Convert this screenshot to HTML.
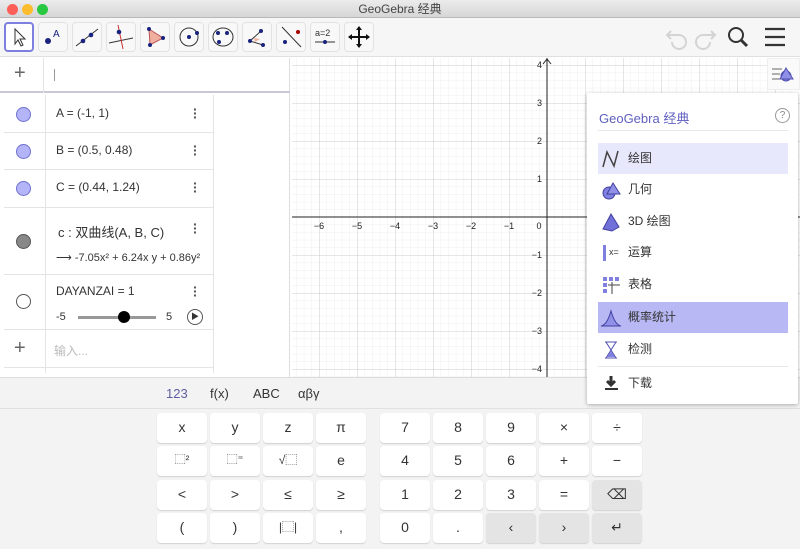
<!DOCTYPE html>
<html><head><meta charset="utf-8"><style>
*{box-sizing:border-box;margin:0;padding:0}
body{width:800px;height:549px;overflow:hidden;background:#fff;font-family:"Liberation Sans","Noto Sans CJK SC",sans-serif;position:relative;color:#333}
.abs{position:absolute}
#title{left:0;top:0;width:800px;height:18px;background:linear-gradient(#ececec,#d6d6d6);border-bottom:1px solid #b8b8b8;text-align:center;font-size:12px;line-height:18px;color:#444}
.dot{position:absolute;top:4px;width:11px;height:11px;border-radius:50%}
#tb{left:0;top:18px;width:800px;height:39px;background:#f6f6f6;border-bottom:1px solid #e0e0e0}
.tool{position:absolute;top:4px;width:30px;height:30px;border:1px solid #e2e2e2;border-radius:4px;background:#f8f8f8}
.row{position:absolute;left:4px;width:209px;border-bottom:1px solid #e4e4e4;font-size:12px}
.mk{position:absolute;left:12px;width:15px;height:15px;border-radius:50%}
.menu3{position:absolute;left:189px;font-size:14px;line-height:4px;color:#555;font-weight:bold}
.key{position:absolute;width:50px;height:30px;background:#fff;border-radius:4px;box-shadow:0 1px 1px #d0d0d0;text-align:center;line-height:28px;font-size:14px;color:#333}
.key.g{background:#e4e4e4}
.mi{position:absolute;left:598px;width:190px;height:31px;font-size:12px;line-height:31px;padding-left:30px;color:#333}
</style></head><body>
<div id="title" class="abs">GeoGebra 经典
<div class="dot" style="left:7px;background:#fc5f57"></div><div class="dot" style="left:22px;background:#fdbc2e"></div><div class="dot" style="left:37px;background:#28c840"></div></div>
<div id="tb" class="abs">
<div class="tool" style="left:4px;border:2px solid #7f7fdf;background:#fff"><svg width="26" height="26"><path d="M9 5 L9 20 L12 16 L15 22 L17 21 L14 15 L19 15 Z" fill="#fff" stroke="#333"/></svg></div>
<div class="tool" style="left:38px"><svg width="28" height="28"><circle cx="9" cy="18" r="3" fill="#1a237e"/><text x="14" y="14" font-size="10" fill="#1a237e">A</text></svg></div>
<div class="tool" style="left:72px"><svg width="28" height="28"><line x1="3" y1="23" x2="25" y2="6" stroke="#333"/><circle cx="10" cy="18" r="2.3" fill="#1a237e"/><circle cx="18" cy="12" r="2.3" fill="#1a237e"/></svg></div>
<div class="tool" style="left:106px"><svg width="28" height="28"><line x1="2" y1="20" x2="26" y2="15" stroke="#333"/><line x1="11" y1="2" x2="16" y2="26" stroke="#c33"/><circle cx="12" cy="9" r="2.3" fill="#1a237e"/></svg></div>
<div class="tool" style="left:140px"><svg width="28" height="28"><path d="M8 6 L22 15 L9 22 Z" fill="#f0b0a0" stroke="#b55"/><circle cx="8" cy="6" r="2" fill="#1a237e"/><circle cx="22" cy="15" r="2" fill="#1a237e"/><circle cx="9" cy="22" r="2" fill="#1a237e"/></svg></div>
<div class="tool" style="left:174px"><svg width="28" height="28"><circle cx="14" cy="14" r="9" fill="none" stroke="#333"/><circle cx="14" cy="14" r="2" fill="#1a237e"/><circle cx="22" cy="10" r="2" fill="#1a237e"/></svg></div>
<div class="tool" style="left:208px"><svg width="28" height="28"><ellipse cx="14" cy="14" rx="10" ry="9" fill="none" stroke="#333"/><circle cx="9" cy="10" r="2" fill="#1a237e"/><circle cx="18" cy="10" r="2" fill="#1a237e"/><circle cx="10" cy="19" r="2" fill="#1a237e"/></svg></div>
<div class="tool" style="left:242px"><svg width="28" height="28"><path d="M7 18 L18 8 M7 18 L20 22" stroke="#333"/><path d="M11 15 L17 16 L12 19Z" fill="#f0b0a0"/><circle cx="18" cy="8" r="2" fill="#1a237e"/><circle cx="7" cy="18" r="2" fill="#1a237e"/><circle cx="20" cy="22" r="2" fill="#1a237e"/></svg></div>
<div class="tool" style="left:276px"><svg width="28" height="28"><line x1="5" y1="4" x2="24" y2="24" stroke="#333"/><circle cx="21" cy="9" r="2" fill="#a00"/><circle cx="8" cy="19" r="2" fill="#1a237e"/></svg></div>
<div class="tool" style="left:310px"><svg width="28" height="28"><text x="4" y="13" font-size="9" fill="#333">a=2</text><line x1="4" y1="19" x2="24" y2="19" stroke="#333"/><circle cx="14" cy="19" r="2" fill="#1a237e"/></svg></div>
<div class="tool" style="left:344px"><svg width="28" height="28"><path d="M14 4 V24 M4 14 H24" stroke="#111" stroke-width="2"/><path d="M14 3 l-3 4 h6z M14 25 l-3 -4 h6z M3 14 l4 -3 v6z M25 14 l-4 -3 v6z" fill="#111"/></svg></div>
<svg class="abs" style="left:660px;top:6px" width="130" height="30"><path d="M12 18 a7 7 0 1 0 7 -7 h-12 m4 -4 l-4 4 l4 4" fill="none" stroke="#d4d4d4" stroke-width="2"/><path d="M50 18 a7 7 0 1 1 -7 -7 h12 m-4 -4 l4 4 l-4 4" fill="none" stroke="#d4d4d4" stroke-width="2"/><circle cx="76" cy="11" r="7" fill="none" stroke="#333" stroke-width="2"/><path d="M81 16 l6 6" stroke="#333" stroke-width="3"/><path d="M105 5 h20 M105 13 h20 M105 21 h20" stroke="#333" stroke-width="2.2"/></svg>
</div>
<!-- algebra -->
<div class="abs" style="left:0;top:58px;width:290px;height:320px;background:#fff;border-right:1px solid #ddd"></div>
<div class="abs" style="left:0;top:58px;width:290px;height:35px;border-bottom:2px solid #c8c8d8"><span class="abs" style="left:14px;top:4px;font-size:20px;color:#666">+</span><div class="abs" style="left:43px;top:0;width:1px;height:35px;background:#e4e4e4"></div><div class="abs" style="left:54px;top:11px;width:1px;height:12px;background:#999"></div></div>
<div class="abs" style="left:45px;top:95px;width:1px;height:278px;background:#e4e4e4"></div>
<div class="abs" style="left:213px;top:95px;width:1px;height:278px;background:#e4e4e4"></div>
<div class="row" style="top:95px;height:38px"><div class="mk" style="top:12px;background:#b4b4f8;border:1px solid #7070d0"></div><span class="abs" style="left:52px;top:11px">A = (-1, 1)</span><div class="menu3" style="top:12px">·<br>·<br>·</div></div>
<div class="row" style="top:133px;height:37px"><div class="mk" style="top:11px;background:#b4b4f8;border:1px solid #7070d0"></div><span class="abs" style="left:52px;top:10px">B = (0.5, 0.48)</span><div class="menu3" style="top:11px">·<br>·<br>·</div></div>
<div class="row" style="top:170px;height:38px"><div class="mk" style="top:11px;background:#b4b4f8;border:1px solid #7070d0"></div><span class="abs" style="left:52px;top:10px">C = (0.44, 1.24)</span><div class="menu3" style="top:11px">·<br>·<br>·</div></div>
<div class="row" style="top:208px;height:67px"><div class="mk" style="top:26px;background:#888;border:1px solid #555"></div><span class="abs" style="left:54px;top:14px;font-size:13px">c : 双曲线(A, B, C)</span><span class="abs" style="left:52px;top:43px;font-size:11px;white-space:nowrap;width:158px;overflow:hidden">⟶ -7.05x² + 6.24x y + 0.86y²</span><div class="menu3" style="top:14px">·<br>·<br>·</div></div>
<div class="row" style="top:275px;height:55px"><div class="mk" style="top:19px;background:#fff;border:1px solid #555"></div><span class="abs" style="left:52px;top:9px">DAYANZAI = 1</span><span class="abs" style="left:52px;top:36px;font-size:11px">-5</span><div class="abs" style="left:74px;top:41px;width:78px;height:3px;background:#999"></div><div class="abs" style="left:114px;top:36px;width:12px;height:12px;border-radius:50%;background:#000"></div><span class="abs" style="left:162px;top:36px;font-size:11px">5</span><div class="abs" style="left:183px;top:34px;width:16px;height:16px;border-radius:50%;border:1px solid #555;font-size:8px;text-align:center;line-height:14px">▶</div><div class="menu3" style="top:10px">·<br>·<br>·</div></div>
<div class="row" style="top:330px;height:38px;border-bottom:1px solid #e4e4e4"><span class="abs" style="left:10px;top:7px;font-size:20px;color:#666">+</span><span class="abs" style="left:50px;top:12px;color:#bbb">输入...</span></div>
<!-- graphics -->
<svg class="abs" style="left:292px;top:58px" width="508" height="320">
<defs><pattern id="mn" x="0" y="0" width="7.6" height="7.6" patternUnits="userSpaceOnUse" patternTransform="translate(255 159)"><path d="M0 0 H7.6 M0 0 V7.6" stroke="#eee" stroke-width="1"/></pattern>
<pattern id="mj" width="38" height="38" patternUnits="userSpaceOnUse" patternTransform="translate(255 159)"><path d="M0 0 H38 M0 0 V38" stroke="#ccc" stroke-width="1"/></pattern></defs>
<rect width="508" height="320" fill="#fff"/><rect width="508" height="320" fill="url(#mn)"/><rect width="508" height="320" fill="url(#mj)"/>
<line x1="0" y1="159" x2="508" y2="159" stroke="#222"/><line x1="255" y1="0" x2="255" y2="320" stroke="#222"/>
<path d="M251 6 l4 -5 l4 5" fill="none" stroke="#222"/>
<g font-size="9" fill="#222" text-anchor="middle"><text x="27" y="171">−6</text><text x="65" y="171">−5</text><text x="103" y="171">−4</text><text x="141" y="171">−3</text><text x="179" y="171">−2</text><text x="217" y="171">−1</text><text x="247" y="171">0</text></g>
<g font-size="9" fill="#222" text-anchor="end"><text x="250" y="10">4</text><text x="250" y="48">3</text><text x="250" y="86">2</text><text x="250" y="124">1</text><text x="250" y="200">−1</text><text x="250" y="238">−2</text><text x="250" y="276">−3</text><text x="250" y="314">−4</text></g>
</svg>
<div class="abs" style="left:767px;top:58px;width:33px;height:32px;background:#fafafa;border:1px solid #eee"><svg width="32" height="30"><path d="M4 10h10M4 15h8M4 20h10" stroke="#666"/><circle cx="18" cy="17" r="5" fill="#8080e0" stroke="#5050b0"/><path d="M18 9 l7 11 h-13z" fill="#9090e8" stroke="#5050b0"/></svg></div>
<!-- keyboard -->
<div class="abs" style="left:0;top:377px;width:800px;height:172px;background:#f3f3f3;border-top:1px solid #ddd"></div>
<div class="abs" style="left:0;top:408px;width:800px;height:1px;background:#e0e0e0"></div>
<span class="abs" style="left:166px;top:386px;font-size:13px;color:#6060a0">123</span>
<span class="abs" style="left:210px;top:386px;font-size:13px">f(x)</span>
<span class="abs" style="left:253px;top:386px;font-size:13px">ABC</span>
<span class="abs" style="left:298px;top:386px;font-size:13px">αβγ</span>
<div class="key" style="left:157px;top:413px">x</div><div class="key" style="left:210px;top:413px">y</div><div class="key" style="left:263px;top:413px">z</div><div class="key" style="left:316px;top:413px">π</div>
<div class="key" style="left:380px;top:413px">7</div><div class="key" style="left:433px;top:413px">8</div><div class="key" style="left:486px;top:413px">9</div><div class="key" style="left:539px;top:413px">×</div><div class="key" style="left:592px;top:413px">÷</div>
<div class="key" style="left:157px;top:446px;font-size:11px">⬚²</div><div class="key" style="left:210px;top:446px;font-size:11px">⬚⁼</div><div class="key" style="left:263px;top:446px;font-size:12px">√⬚</div><div class="key" style="left:316px;top:446px">e</div>
<div class="key" style="left:380px;top:446px">4</div><div class="key" style="left:433px;top:446px">5</div><div class="key" style="left:486px;top:446px">6</div><div class="key" style="left:539px;top:446px">+</div><div class="key" style="left:592px;top:446px">−</div>
<div class="key" style="left:157px;top:480px">&lt;</div><div class="key" style="left:210px;top:480px">&gt;</div><div class="key" style="left:263px;top:480px">≤</div><div class="key" style="left:316px;top:480px">≥</div>
<div class="key" style="left:380px;top:480px">1</div><div class="key" style="left:433px;top:480px">2</div><div class="key" style="left:486px;top:480px">3</div><div class="key" style="left:539px;top:480px">=</div><div class="key g" style="left:592px;top:480px">⌫</div>
<div class="key" style="left:157px;top:513px">(</div><div class="key" style="left:210px;top:513px">)</div><div class="key" style="left:263px;top:513px;font-size:12px">|⬚|</div><div class="key" style="left:316px;top:513px">,</div>
<div class="key" style="left:380px;top:513px">0</div><div class="key" style="left:433px;top:513px">.</div><div class="key g" style="left:486px;top:513px">‹</div><div class="key g" style="left:539px;top:513px">›</div><div class="key g" style="left:592px;top:513px">↵</div>
<!-- popup -->
<div class="abs" style="left:587px;top:93px;width:211px;height:311px;background:#fff;box-shadow:0 1px 4px rgba(0,0,0,.3);border-radius:2px"></div>
<span class="abs" style="left:599px;top:108px;font-size:13px;color:#6060c0">GeoGebra 经典</span>
<div class="abs" style="left:775px;top:108px;width:15px;height:15px;border-radius:50%;border:1px solid #999;font-size:10px;text-align:center;line-height:13px;color:#888">?</div>
<div class="abs" style="left:598px;top:130px;width:190px;height:1px;background:#e8e8e8"></div>
<div class="mi" style="top:143px;background:#e8e8fc"><svg class="abs" style="left:3px;top:6px" width="20" height="20"><path d="M2 18 L6 3 L13 17 L17 2" fill="none" stroke="#444" stroke-width="1.5"/></svg>绘图</div>
<div class="mi" style="top:174px"><svg class="abs" style="left:3px;top:6px" width="20" height="20"><circle cx="8" cy="13" r="6" fill="#8080e0" stroke="#4040a0"/><path d="M12 3 l7 11 h-13z" fill="#9090e8" stroke="#4040a0"/></svg>几何</div>
<div class="mi" style="top:206px"><svg class="abs" style="left:3px;top:6px" width="20" height="20"><path d="M10 2 L2 17 L11 19 L18 15Z" fill="#7070d8" stroke="#4040a0"/></svg>3D 绘图</div>
<div class="mi" style="top:237px"><div class="abs" style="left:5px;top:8px;width:3px;height:16px;background:#8080e0"></div><span class="abs" style="left:11px;top:0;font-size:9px">x=</span>运算</div>
<div class="mi" style="top:269px"><svg class="abs" style="left:3px;top:6px" width="20" height="20"><path d="M2 2h4v4h-4zM8 2h4v4h-4zM14 2h4v4h-4zM2 8h4v4h-4zM2 14h4v4h-4z" fill="#8080e0"/><path d="M7 10h12M11 7v12" stroke="#444"/></svg>表格</div>
<div class="mi" style="top:302px;background:#b8b8f4"><svg class="abs" style="left:2px;top:6px" width="22" height="20"><path d="M1 18 Q7 17 11 3 Q15 17 21 18Z" fill="#9090e8" stroke="#4040a0"/></svg>概率统计</div>
<div class="mi" style="top:334px"><svg class="abs" style="left:4px;top:6px" width="20" height="20"><path d="M3 2h12M3 18h12M4 2 L14 18 M14 2 L4 18" stroke="#5050b0" fill="none"/><path d="M5 17 L9 11 L13 17Z" fill="#8080e0"/></svg>检测</div>
<div class="abs" style="left:598px;top:366px;width:190px;height:1px;background:#e8e8e8"></div>
<div class="mi" style="top:368px"><svg class="abs" style="left:4px;top:6px" width="20" height="20"><path d="M9 2v8 M5 7 l4 4 l4 -4" stroke="#333" stroke-width="3" fill="none"/><path d="M3 15h13" stroke="#333" stroke-width="2"/></svg>下载</div>
</body></html>
